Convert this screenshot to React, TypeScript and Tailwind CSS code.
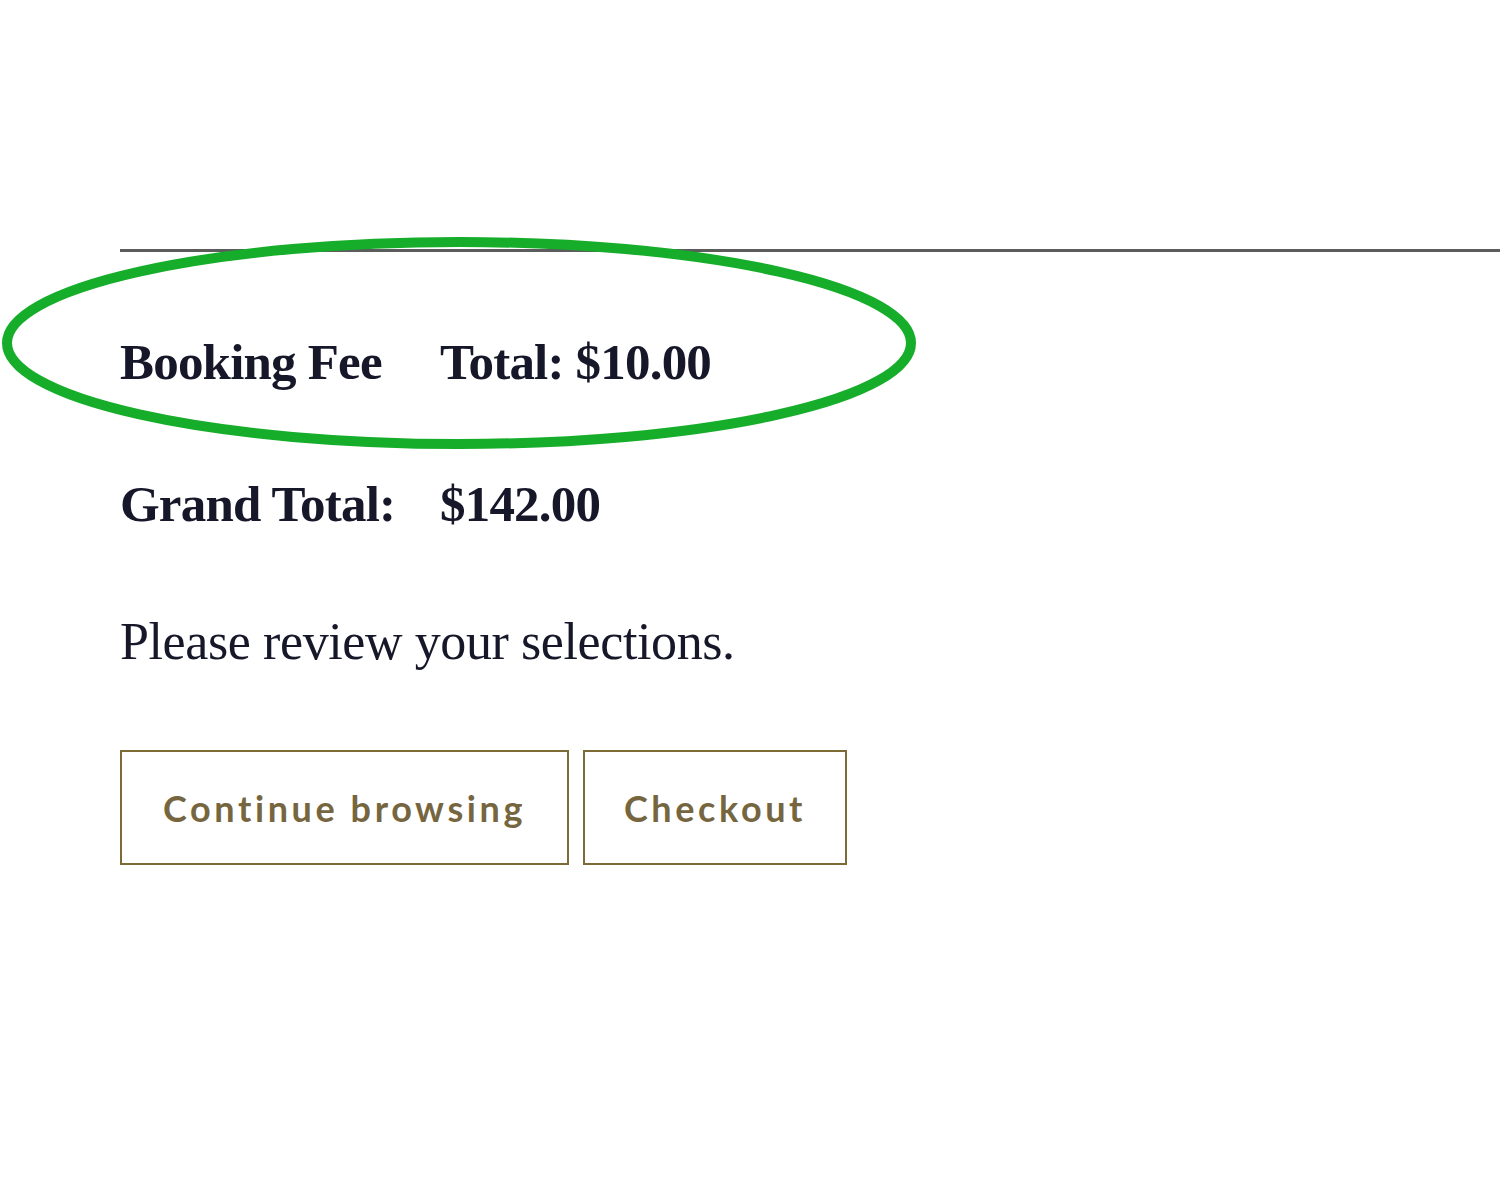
import React from 'react';

const serif = { fontFamily: '"Liberation Serif", "Times New Roman", serif' };
const sans = { fontFamily: 'Lato, "Open Sans", sans-serif' };

function SummaryRow({ label, value }: { label: string; value: string }) {
  return (
    <div className="flex h-[57px] items-start text-[51px] leading-[57px] font-bold tracking-[-0.8px] text-[#17172a]">
      <span className="w-[320px]">{label}</span>
      <span>{value}</span>
    </div>
  );
}

export default function App() {
  return (
    <div className="relative min-h-[1200px] w-full overflow-hidden bg-white" style={serif}>
      <div className="pl-[120px] pt-[249px]">
        <div className="h-[4px] border-t-[3px] border-[#5c5c5c]" />

        <div className="mt-[81px]">
          <SummaryRow label="Booking Fee" value="Total: $10.00" />
        </div>
        <div className="mt-[85px]">
          <SummaryRow label="Grand Total:" value="$142.00" />
        </div>

        <p className="mt-[79px] h-[60px] text-[52px] leading-[60px] tracking-[-0.4px] text-[#17172a]">
          Please review your selections.
        </p>

        <div className="mt-[78px] flex gap-[14px]">
          <button
            className="flex h-[115px] w-[449px] items-center justify-center border-2 border-[#7d6b35] bg-white text-[36px] font-bold tracking-[3.6px] text-[#76663f]"
            style={sans}
          >
            Continue browsing
          </button>
          <button
            className="flex h-[115px] w-[264px] items-center justify-center border-2 border-[#7d6b35] bg-white text-[36px] font-bold tracking-[3.6px] text-[#76663f]"
            style={sans}
          >
            Checkout
          </button>
        </div>
      </div>

      {/* hand-drawn highlight around the booking fee line */}
      <svg
        className="pointer-events-none absolute left-0 top-[230px]"
        width="930"
        height="230"
        viewBox="0 0 930 230"
      >
        <ellipse cx="459" cy="113" rx="452" ry="101" fill="none" stroke="#16ad2a" strokeWidth="10" />
      </svg>
    </div>
  );
}
